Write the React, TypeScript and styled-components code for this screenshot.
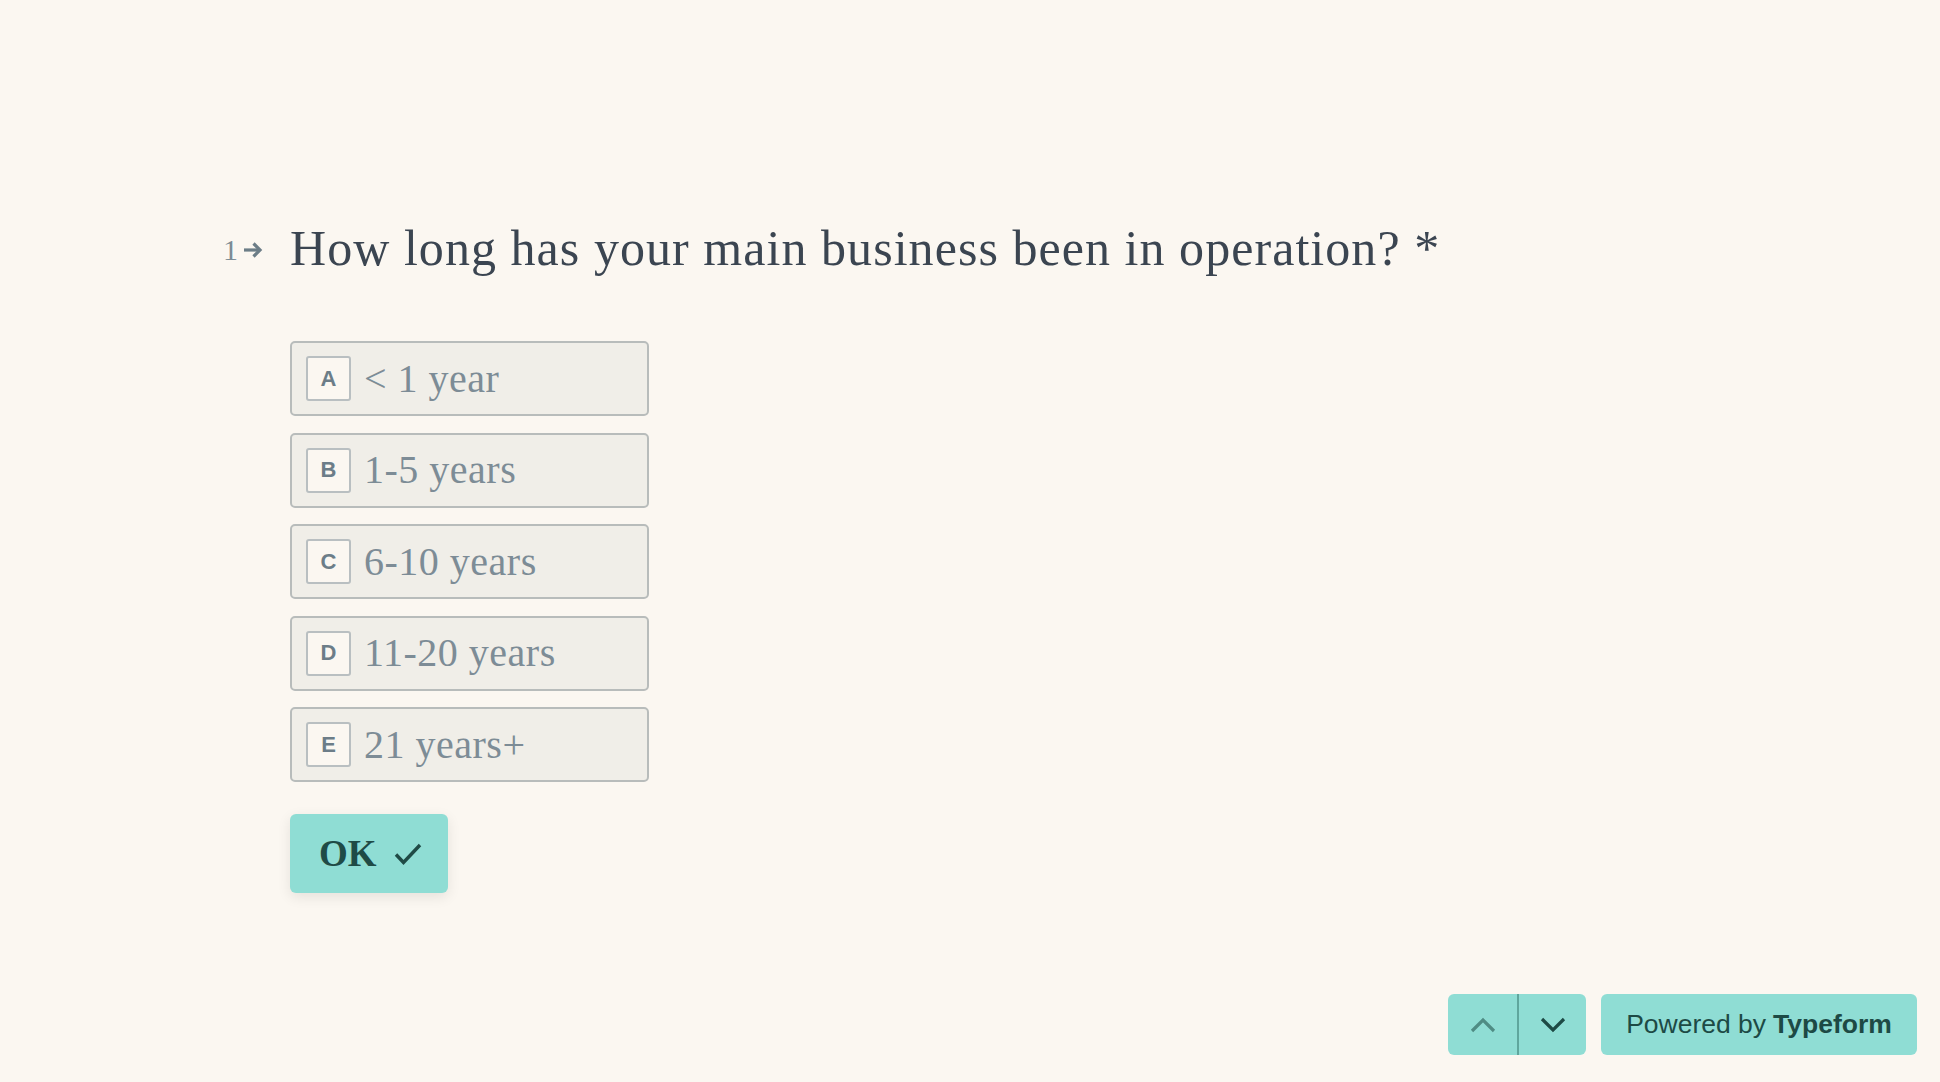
import React from "react";
import styled, { createGlobalStyle } from "styled-components";

const GlobalStyle = createGlobalStyle`
  html, body { margin: 0; padding: 0; background: #fbf7f1; }
  * { box-sizing: border-box; }
`;

const Page = styled.div`
  height: 100vh;
  display: flex;
  flex-direction: column;
  background: #fbf7f1;
`;

const Main = styled.main`
  flex: 1;
  padding: 213px 0 0 223px;
`;

const QuestionRow = styled.div`
  display: flex;
  align-items: flex-start;
`;

const Counter = styled.div`
  width: 67px;
  display: flex;
  align-items: center;
  gap: 5px;
  padding-top: 20px;
  font-family: "Liberation Serif", serif;
  font-size: 30px;
  color: #7c8b94;
`;

const Body = styled.div`
  display: flex;
  flex-direction: column;
`;

const Question = styled.h1`
  margin: 0;
  font-family: "Liberation Serif", serif;
  font-weight: 400;
  font-size: 50px;
  letter-spacing: 1.05px;
  line-height: 70px;
  color: #3b4551;
`;

const Options = styled.div`
  margin-top: 58px;
  display: flex;
  flex-direction: column;
  gap: 16.5px;
  width: 359px;
`;

const Option = styled.div`
  height: 75px;
  display: flex;
  align-items: center;
  gap: 13px;
  padding: 0 14px;
  background: #f0eee8;
  border: 2px solid #b8bcbb;
  border-radius: 5px;
`;

const Key = styled.span`
  width: 45px;
  height: 45px;
  display: flex;
  align-items: center;
  justify-content: center;
  background: #fbf7f1;
  border: 2px solid #b9bfc1;
  border-radius: 3px;
  font-family: "Liberation Sans", Arial, sans-serif;
  font-weight: 700;
  font-size: 22px;
  color: #6c7d88;
`;

const Label = styled.span`
  font-family: "Liberation Serif", serif;
  font-size: 40px;
  letter-spacing: 0.5px;
  color: #7d8c96;
  line-height: 1;
`;

const OkButton = styled.button`
  margin-top: 32px;
  align-self: flex-start;
  height: 79px;
  width: 158px;
  display: flex;
  align-items: center;
  gap: 17px;
  padding: 0 0 0 29px;
  border: none;
  border-radius: 6px;
  background: #8fddd4;
  box-shadow: 0 4px 14px rgba(0, 0, 0, 0.09);
  font-family: "Liberation Serif", serif;
  font-weight: 700;
  font-size: 37px;
  color: #1f4b46;
  cursor: pointer;
`;

const Footer = styled.footer`
  display: flex;
  justify-content: flex-end;
  gap: 15px;
  padding: 0 23px 27px 0;
`;

const NavGroup = styled.div`
  display: flex;
  height: 61px;
  border-radius: 6px;
  overflow: hidden;
  background: #8fddd4;
`;

const NavButton = styled.button<{ $dim?: boolean; $divider?: boolean }>`
  width: 69px;
  height: 100%;
  display: flex;
  align-items: center;
  justify-content: center;
  border: none;
  background: transparent;
  border-left: ${(p) => (p.$divider ? "2px solid #5fa69d" : "none")};
  color: ${(p) => (p.$dim ? "#4f8c84" : "#1d4a45")};
  padding: 0;
`;

const Powered = styled.div`
  height: 61px;
  width: 316px;
  display: flex;
  align-items: center;
  justify-content: center;
  border-radius: 6px;
  background: #8fddd4;
  font-family: "Liberation Sans", Arial, sans-serif;
  font-size: 26.5px;
  color: #1d4a45;
  b { font-weight: 700; margin-left: 7px; }
`;

const options = [
  { key: "A", label: "< 1 year" },
  { key: "B", label: "1-5 years" },
  { key: "C", label: "6-10 years" },
  { key: "D", label: "11-20 years" },
  { key: "E", label: "21 years+" },
];

export default function App() {
  return (
    <Page>
      <GlobalStyle />
      <Main>
        <QuestionRow>
          <Counter>
            <span>1</span>
            <svg width="21" height="18" viewBox="0 0 21 18" fill="none">
              <path d="M1 9h16" stroke="#6c7d87" strokeWidth="3.2" />
              <path d="M10.5 2.5L17 9l-6.5 6.5" stroke="#6c7d87" strokeWidth="3.2" />
            </svg>
          </Counter>
          <Body>
            <Question>How long has your main business been in operation? *</Question>
            <Options>
              {options.map((o) => (
                <Option key={o.key}>
                  <Key>{o.key}</Key>
                  <Label>{o.label}</Label>
                </Option>
              ))}
            </Options>
            <OkButton>
              OK
              <svg width="28" height="24" viewBox="0 0 28 24" fill="none">
                <path d="M2 12.5l7.5 8L26 3" stroke="#1f4b46" strokeWidth="3.4" />
              </svg>
            </OkButton>
          </Body>
        </QuestionRow>
      </Main>
      <Footer>
        <NavGroup>
          <NavButton $dim aria-label="previous">
            <svg width="26" height="16" viewBox="0 0 26 16" fill="none">
              <path d="M2 14L13 3l11 11" stroke="currentColor" strokeWidth="3.2" />
            </svg>
          </NavButton>
          <NavButton $divider aria-label="next">
            <svg width="26" height="16" viewBox="0 0 26 16" fill="none">
              <path d="M2 2l11 11L24 2" stroke="currentColor" strokeWidth="3.2" />
            </svg>
          </NavButton>
        </NavGroup>
        <Powered>
          Powered by<b>Typeform</b>
        </Powered>
      </Footer>
    </Page>
  );
}
